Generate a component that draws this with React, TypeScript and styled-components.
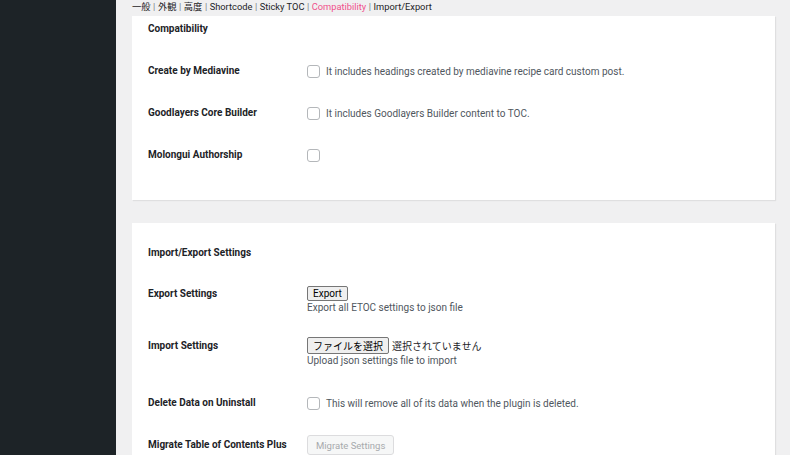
import React from 'react';
import styled, { createGlobalStyle } from 'styled-components';

const GlobalStyle = createGlobalStyle`
  html, body {
    margin: 0;
    padding: 0;
    height: 100%;
    overflow: hidden;
    background: #f0f0f1;
    font-family: Roboto, "Noto Sans CJK JP", sans-serif;
  }
  #root {
    height: 100%;
  }
`;

const Layout = styled.div`
  display: flex;
  height: 455px;
`;

const Sidebar = styled.aside`
  width: 116px;
  flex-shrink: 0;
  background: #1d2327;
`;

const Main = styled.main`
  flex: 1;
  padding: 0 15px 0 16px;
  display: flex;
  flex-direction: column;
  overflow: hidden;
`;

const Tabs = styled.nav`
  height: 16px;
  flex-shrink: 0;
  font-size: 9.3px;
  line-height: 13px;
  color: #1d2327;
  white-space: nowrap;
`;

const Tab = styled.a<{ $active?: boolean }>`
  color: ${(p) => (p.$active ? '#f0508c' : '#1d2327')};
  text-decoration: none;
`;

const Sep = styled.span`
  color: #787c82;
  margin: 0 2.5px;
`;

const Card = styled.section<{ $pb: number }>`
  background: #fff;
  box-shadow: 1px 1px 1px rgba(0, 0, 0, 0.07);
  padding: 0 16px ${(p) => p.$pb}px;
  margin-bottom: 23px;
  flex-shrink: 0;
`;

const Heading = styled.h2<{ $pt: number }>`
  margin: 0;
  padding-top: ${(p) => p.$pt}px;
  font-size: 10px;
  line-height: 16px;
  font-weight: 700;
  color: #1d2327;
`;

const Row = styled.div<{ $pt: number }>`
  display: grid;
  grid-template-columns: 159px 1fr;
  align-items: start;
  padding-top: ${(p) => p.$pt}px;
`;

const Label = styled.div<{ $lh?: number }>`
  font-size: 10px;
  font-weight: 700;
  line-height: ${(p) => p.$lh ?? 16}px;
  color: #1d2327;
`;

const Field = styled.div`
  display: flex;
  flex-direction: column;
  align-items: flex-start;
`;

const Line = styled.div<{ $h?: number }>`
  display: flex;
  align-items: center;
  min-height: ${(p) => p.$h ?? 16}px;
  gap: 6px;
`;

const Checkbox = styled.span`
  width: 11px;
  height: 11px;
  border: 1px solid #b4b7ba;
  border-radius: 3px;
  background: #fff;
  flex-shrink: 0;
`;

const Desc = styled.span`
  font-size: 10px;
  line-height: 13px;
  color: #50575e;
`;

const NativeButton = styled.span<{ $h: number }>`
  display: inline-flex;
  align-items: center;
  height: ${(p) => p.$h}px;
  box-sizing: border-box;
  padding: 0 5px;
  border: 1px solid #767676;
  border-radius: 2px;
  background: #efefef;
  font-size: 10px;
  color: #000;
`;

const FileName = styled.span`
  font-size: 10px;
  color: #1d2327;
  margin-left: -3px;
`;

const DisabledButton = styled.span`
  display: inline-flex;
  align-items: center;
  height: 20px;
  box-sizing: border-box;
  padding: 0 8px;
  border: 1px solid #dcdcde;
  border-radius: 3px;
  background: #f6f7f7;
  color: #a7aaad;
  font-size: 9.5px;
`;

const tabs = ['一般', '外観', '高度', 'Shortcode', 'Sticky TOC', 'Compatibility', 'Import/Export'];

const compat = [
  { label: 'Create by Mediavine', desc: 'It includes headings created by mediavine recipe card custom post.' },
  { label: 'Goodlayers Core Builder', desc: 'It includes Goodlayers Builder content to TOC.' },
  { label: 'Molongui Authorship', desc: '' },
];

export default function App() {
  return (
    <>
      <GlobalStyle />
      <Layout>
        <Sidebar />
        <Main>
          <Tabs>
            {tabs.map((t, i) => (
              <React.Fragment key={t}>
                {i > 0 && <Sep>|</Sep>}
                <Tab href="#" $active={t === 'Compatibility'}>
                  {t}
                </Tab>
              </React.Fragment>
            ))}
          </Tabs>

          <Card $pb={37}>
            <Heading $pt={5}>Compatibility</Heading>
            {compat.map((c) => (
              <Row key={c.label} $pt={26}>
                <Label>{c.label}</Label>
                <Line>
                  <Checkbox />
                  {c.desc && <Desc>{c.desc}</Desc>}
                </Line>
              </Row>
            ))}
          </Card>

          <Card $pb={25}>
            <Heading $pt={22}>Import/Export Settings</Heading>
            <Row $pt={25}>
              <Label $lh={15}>Export Settings</Label>
              <Field>
                <NativeButton $h={15}>Export</NativeButton>
                <Desc>Export all ETOC settings to json file</Desc>
              </Field>
            </Row>
            <Row $pt={23}>
              <Label $lh={17}>Import Settings</Label>
              <Field>
                <Line $h={17}>
                  <NativeButton $h={17}>ファイルを選択</NativeButton>
                  <FileName>選択されていません</FileName>
                </Line>
                <Desc>Upload json settings file to import</Desc>
              </Field>
            </Row>
            <Row $pt={28}>
              <Label>Delete Data on Uninstall</Label>
              <Line>
                <Checkbox />
                <Desc>This will remove all of its data when the plugin is deleted.</Desc>
              </Line>
            </Row>
            <Row $pt={24}>
              <Label $lh={20}>Migrate Table of Contents Plus</Label>
              <Field>
                <DisabledButton>Migrate Settings</DisabledButton>
              </Field>
            </Row>
          </Card>
        </Main>
      </Layout>
    </>
  );
}
